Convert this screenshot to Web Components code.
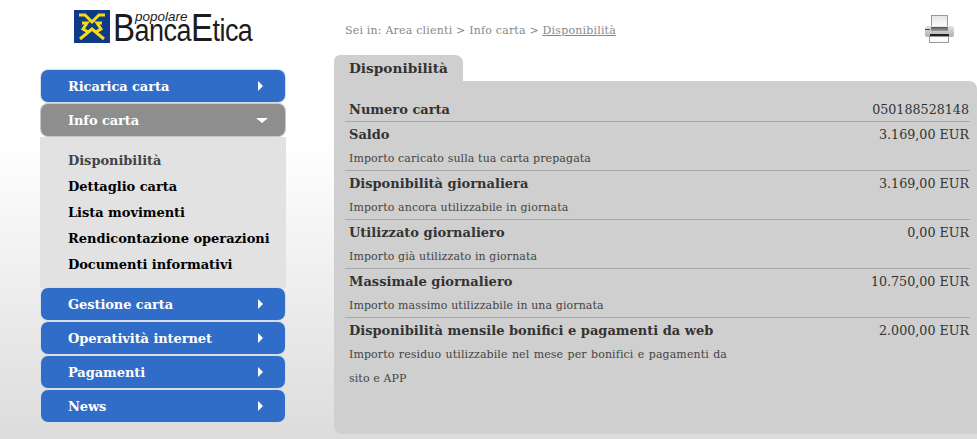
<!DOCTYPE html>
<html lang="it">
<head>
<meta charset="utf-8">
<title>Disponibilità</title>
<style>
  html, body { margin: 0; height: 100%; }
  body {
    font-family: "DejaVu Serif", serif;
    background: linear-gradient(#fff 0, #fff 140px, #dcdcdc 439px);
    overflow: hidden;
  }
  .page { display: grid; grid-template-columns: 334px 1fr; height: 439px; }
</style>
</head>
<body>
<template id="logo-tpl">
  <style>
    :host { display: flex; height: 55px; padding: 10px 0 0 74px; box-sizing: border-box; align-items: flex-start; gap: 3px; }
    .words { position: relative; display: block; font-family: "Liberation Sans", sans-serif; color: #1c1c1c; line-height: 1; }
    .name { display: block; font-size: 38px; letter-spacing: -.6px; margin-top: -1px; white-space: nowrap; transform: scaleX(.87); transform-origin: 0 0; }
    .name span { font-size: 31px; }
    .top { position: absolute; left: 22px; top: 0; font-size: 13.5px; font-style: italic; }
    svg { display: block; }
  </style>
  <svg width="36" height="33" viewBox="0 0 36 33">
    <rect width="36" height="33" fill="#0f3a86"/>
    <path d="M5 5H11L18 12L25 5H31M8 13H13L9 19L14 22M28 13H23L27 19L22 22M6 29L18 19L30 29" fill="none" stroke="#f5dc12" stroke-width="3"/>
  </svg>
  <span class="words"><span class="top">popolare</span><span class="name">B<span>anca</span>E<span>tica</span></span></span>
</template>

<template id="side-menu-tpl">
  <style>
    :host { display: flex; flex-direction: column; padding: 0 48px 0 40px; gap: 2px; }
  </style>
  <slot></slot>
</template>

<template id="menu-item-tpl">
  <style>
    :host { display: block; color: #fff; font-size: 13px; font-weight: bold; }
    .label { letter-spacing: -.08px; }
    .btn {
      display: flex; align-items: center; justify-content: space-between; height: 32px; margin: 0 1px;
      padding: 0 22px 0 27px; background: #2f6dc8; border-radius: 7px; box-shadow: 0 0 0 1px #d8dde6;
    }
    :host([open]) .btn { background: #8e8e8e; box-shadow: 0 0 0 1px #c8c8c8; }
    .right { width: 0; height: 0; border-left: 5px solid #fff; border-top: 5px solid transparent; border-bottom: 5px solid transparent; }
    :host([open]) .right { border-top: 5px solid #fff; border-left: 6px solid transparent; border-right: 6px solid transparent; border-bottom: 0; margin-right: -5px; }
    .sub { display: none; background: #e2e2e2; margin-top: 1px; margin-bottom: -2px; padding: 11px 0 10px 28px; height: 130px; flex-direction: column; }
    :host([open]) .sub { display: flex; }
    ::slotted(*) { display: block; height: 26px; line-height: 26px; color: #000; font-weight: bold; font-size: 13px; letter-spacing: -.05px; }
    ::slotted(.current) { color: #444; }
  </style>
  <div class="btn"><span class="label"></span><span class="right"></span></div>
  <div class="sub"><slot></slot></div>
</template>

<template id="top-bar-tpl">
  <style>
    :host { display: flex; justify-content: space-between; align-items: center; height: 55px; padding: 5px 23px 0 11px; box-sizing: border-box; font-size: 11px; letter-spacing: .2px; color: #888; }
    u { color: #888; }
    svg { display: block; margin-top: -2px; }
  </style>
  <span>Sei in: Area clienti &gt; Info carta &gt; <u>Disponibilità</u></span>
  <svg width="30" height="30" viewBox="0 0 30 30">
    <defs>
      <linearGradient id="paper" x1="0" y1="0" x2="0" y2="1"><stop offset="0" stop-color="#e4e4e4"/><stop offset="1" stop-color="#fff"/></linearGradient>
      <linearGradient id="case" x1="0" y1="0" x2="0" y2="1"><stop offset="0" stop-color="#e2e2e2"/><stop offset="1" stop-color="#b0b0b0"/></linearGradient>
      <linearGradient id="slot" x1="0" y1="0" x2="0" y2="1"><stop offset="0" stop-color="#555"/><stop offset="1" stop-color="#a0a0a0"/></linearGradient>
    </defs>
    <rect x="7.5" y="1.5" width="16" height="12" fill="url(#paper)" stroke="#999"/>
    <rect x="1" y="12" width="29" height="11" rx="2.5" fill="url(#case)"/>
    <rect x="7" y="13" width="17" height="4" fill="url(#slot)"/>
    <rect x="1" y="15" width="5" height="1" fill="#444"/>
    <rect x="6" y="20" width="19" height="3" fill="#222"/>
    <rect x="5.5" y="22.5" width="19" height="6" fill="#fafafa" stroke="#999"/>
  </svg>
</template>

<template id="info-panel-tpl">
  <style>
    :host { display: block; color: #333; }
    .tab { display: inline-block; background: #cfcfcf; width: 129px; height: 26px; box-sizing: border-box; padding: 5px 0 0 15px; border-radius: 6px 8px 0 0; font-size: 13.7px; font-weight: bold; vertical-align: top; }
    .body { background: #cfcfcf; height: 353px; box-sizing: border-box; padding: 16px 7px 0 11px; border-radius: 0 0 0 8px; border-top-right-radius: 8px; }
  </style>
  <div class="tab"></div>
  <div class="body"><slot></slot></div>
</template>

<template id="info-row-tpl">
  <style>
    :host { display: block; border-bottom: 1px solid #a8a8a8; padding: 0 1px 0 4px; }
    :host(:last-child) { border-bottom: 0; }
    .head { display: flex; justify-content: space-between; height: 24px; line-height: 26px; font-size: 13px; }
    b { color: #333; }
    .val { font-size: 12.7px; }
    .desc { font-size: 11px; letter-spacing: .1px; line-height: 24px; padding-top: 1px; margin-bottom: -1px; color: #444; width: 378px; text-align: justify; }
    .desc:empty { display: none; }
  </style>
  <div class="head"><b></b><span class="val"></span></div>
  <div class="desc"></div>
</template>

<div class="page">
  <aside>
    <bank-logo></bank-logo>
    <div style="height:15px"></div>
    <side-menu>
      <menu-item label="Ricarica carta"></menu-item>
      <menu-item label="Info carta" open>
        <span class="current">Disponibilità</span>
        <span>Dettaglio carta</span>
        <span>Lista movimenti</span>
        <span>Rendicontazione operazioni</span>
        <span>Documenti informativi</span>
      </menu-item>
      <menu-item label="Gestione carta"></menu-item>
      <menu-item label="Operatività internet"></menu-item>
      <menu-item label="Pagamenti"></menu-item>
      <menu-item label="News"></menu-item>
    </side-menu>
  </aside>
  <main>
    <top-bar></top-bar>
    <info-panel tab="Disponibilità">
      <info-row label="Numero carta" value="050188528148"></info-row>
      <info-row label="Saldo" value="3.169,00 EUR" desc="Importo caricato sulla tua carta prepagata"></info-row>
      <info-row label="Disponibilità giornaliera" value="3.169,00 EUR" desc="Importo ancora utilizzabile in giornata"></info-row>
      <info-row label="Utilizzato giornaliero" value="0,00 EUR" desc="Importo già utilizzato in giornata"></info-row>
      <info-row label="Massimale giornaliero" value="10.750,00 EUR" desc="Importo massimo utilizzabile in una giornata"></info-row>
      <info-row label="Disponibilità mensile bonifici e pagamenti da web" value="2.000,00 EUR" desc="Importo residuo utilizzabile nel mese per bonifici e pagamenti da sito e APP"></info-row>
    </info-panel>
  </main>
</div>

<script>
// clones a template into an open shadow root
class Base extends HTMLElement {
  constructor(tplId) {
    super();
    this.attachShadow({ mode: 'open' });
    this.shadowRoot.appendChild(document.getElementById(tplId).content.cloneNode(true));
  }
}

class BankLogo extends Base { constructor() { super('logo-tpl'); } }
class SideMenu extends Base { constructor() { super('side-menu-tpl'); } }
class TopBar extends Base { constructor() { super('top-bar-tpl'); } }

class MenuItem extends Base {
  constructor() { super('menu-item-tpl'); }
  connectedCallback() {
    this.shadowRoot.querySelector('.label').textContent = this.getAttribute('label');
  }
}

class InfoPanel extends Base {
  constructor() { super('info-panel-tpl'); }
  connectedCallback() {
    this.shadowRoot.querySelector('.tab').textContent = this.getAttribute('tab');
  }
}

class InfoRow extends Base {
  constructor() { super('info-row-tpl'); }
  connectedCallback() {
    this.shadowRoot.querySelector('b').textContent = this.getAttribute('label');
    this.shadowRoot.querySelector('.val').textContent = this.getAttribute('value');
    this.shadowRoot.querySelector('.desc').textContent = this.getAttribute('desc') || '';
  }
}

customElements.define('bank-logo', BankLogo);
customElements.define('side-menu', SideMenu);
customElements.define('top-bar', TopBar);
customElements.define('menu-item', MenuItem);
customElements.define('info-panel', InfoPanel);
customElements.define('info-row', InfoRow);
</script>
</body>
</html>
